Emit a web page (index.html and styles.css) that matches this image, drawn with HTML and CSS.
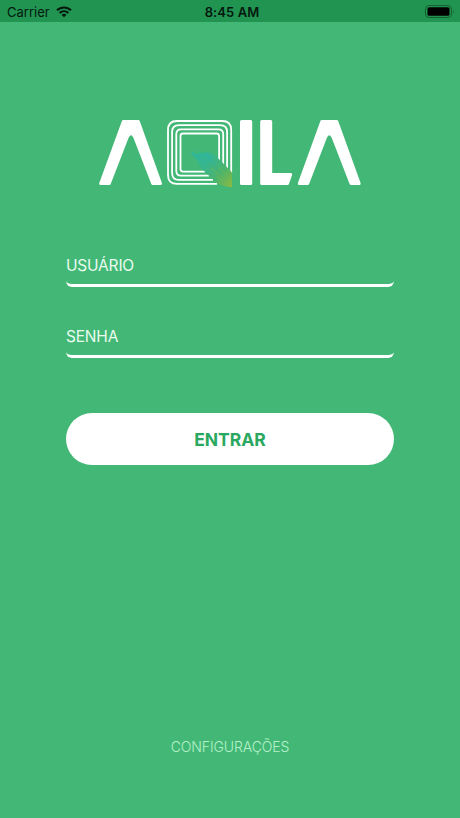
FILE: index.html
```html
<!DOCTYPE html>
<html lang="pt-BR">
<head>
    <meta charset="UTF-8">
    <meta name="viewport" content="width=device-width, initial-scale=1.0">
    <title>Aqila</title>
    <link rel="stylesheet" href="styles.css">
</head>
<body>

    <div class="status-bar">
        <div class="carrier">
            <span>Carrier</span>
            <svg class="wifi" width="16" height="12" viewBox="0 0 16 12" fill="none" stroke="#04180d" stroke-width="2">
                <path d="M1 4.3C5 .4 11 .4 15 4.3"/>
                <path d="M3.6 7C6.200 4.600 9.800 4.600 12.400 7"/>
                <path d="M8 11.300L5.500 8.800C7 7.500 9 7.500 10.500 8.800Z" fill="#04180d" stroke="none"/>
            </svg>
        </div>
        <div class="clock">8:45 AM</div>
        <svg class="battery" width="30" height="13" viewBox="0 0 30 13">
            <rect x=".5" y=".5" width="26" height="12" rx="3.5" fill="none" stroke="#14622f"/>
            <rect x="2.500" y="2.300" width="22" height="8.400" rx="1.500" fill="#000"/>
            <path d="M28 4.500Q29.300 6.500 28 8.500Z" fill="#14622f"/>
        </svg>
    </div>

    <main class="login">
        <svg class="logo" width="264" height="70" viewBox="98 119 264 70" role="img" aria-label="Aqila">
            <defs>
                <linearGradient id="feather" x1="189" y1="152" x2="232" y2="187" gradientUnits="userSpaceOnUse">
                    <stop offset="0" stop-color="#2fb892"/>
                    <stop offset=".4" stop-color="#39b58c"/>
                    <stop offset=".7" stop-color="#4cb36b"/>
                    <stop offset="1" stop-color="#8dbb41"/>
                </linearGradient>
            </defs>

            <g fill="#fff" stroke="#fff" stroke-width="3" stroke-linejoin="round">
                <path d="M123.300 121.500H138.300L160.500 183.500H152.700L134.700 137Q131 130.500 127.300 137L109.300 183.500H100.700Z"/>
                <path d="M241.500 121.500H250.700V183.500H241.500Z"/>
                <path d="M261.700 121.500H270.700V174.400H290.700L287.500 183.500H261.700Z"/>
                <path d="M321.800 121.500H336.800L359.200 183.500H351L333 137Q329.300 130.500 325.600 137L307.700 183.500H299.300Z"/>
            </g>

            <!-- Q rings -->
            <g fill="none" stroke="#fff" stroke-width="1.800">
                <path d="M217 183.900H177Q168 183.900 168 174.900V130Q168 121 177 121H222.200Q231.200 121 231.200 130V173"/>
                <path d="M213 179.800H179Q172.100 179.800 172.100 172.900V132Q172.100 125.100 179 125.100H220.200Q227.100 125.100 227.100 132V169"/>
                <path d="M209 175.700H181Q176.300 175.700 176.300 171V134Q176.300 129.300 181 129.300H218.500Q223.200 129.300 223.200 134V165"/>
                <path d="M205 171.600H183Q180.500 171.600 180.500 169.100V136Q180.500 133.500 183 133.500H216.600Q219.100 133.500 219.100 136V161"/>
            </g>

            <!-- Feather tail -->
            <path fill="url(#feather)" d="M188.500 152L193 154L192 151L196 154L199 153L198 150.500L202 153L206 151.500C212 152.500 216 156 221 161L232 172.500V187.300C226 186.500 221 185.500 216.500 183L203 170L197 162.500L200 163L193 157L196 157.500Z"/>
            <path fill="none" stroke="#79b94a" stroke-width="1" opacity=".6" d="M211 168L231 185M219 168L231 179M216 176L223 181"/>
            <path fill="none" stroke="#2ab6b8" stroke-width="1.500" opacity=".5" d="M192 153L207 163M201 154L216 164M206 154L211 158"/>
        </svg>

        <form class="form">
            <input class="field" type="text" placeholder="USUÁRIO" aria-label="USUÁRIO">
            <input class="field" type="password" placeholder="SENHA" aria-label="SENHA">
            <button class="enter" type="button">ENTRAR</button>
        </form>

        <a class="settings" href="#">CONFIGURAÇÕES</a>
    </main>

</body>
</html>
```
FILE: styles.css
```css
* {
    box-sizing: border-box;
}

body {
    margin: 0;
    height: 100vh;
    display: flex;
    flex-direction: column;
    overflow: hidden;
    background-color: #43b876;
    font-family: Inter, "Liberation Sans", sans-serif;
}

.status-bar {
    height: 22px;
    flex: none;
    display: grid;
    grid-template-columns: 1fr auto 1fr;
    align-items: center;
    padding: 1px 5px 0 7px;
    background-color: #219452;
    color: #04180d;
    font-size: 13px;
}

.carrier {
    display: flex;
    align-items: center;
    gap: 6px;
}

.clock {
    padding-left: 2px;
    font-weight: 600;
    letter-spacing: 0.1px;
}

.battery {
    justify-self: end;
}

.login {
    flex: 1;
    display: flex;
    flex-direction: column;
    align-items: center;
    padding: 97px 66px 62px;
}

.logo {
    display: block;
    flex: none;
}

.form {
    width: 100%;
    display: flex;
    flex-direction: column;
    margin-top: 57px;
}

/* Underline with the ends curving up */
.field {
    width: 100%;
    height: 41px;
    margin: 0 0 30px;
    padding: 1px 0 0;
    border: 0 solid #fff;
    border-bottom-width: 3px;
    border-radius: 6px;
    outline: none;
    background: transparent;
    color: #fff;
    font-family: inherit;
    font-size: 15.5px;
    letter-spacing: -0.2px;
}

.field::placeholder {
    color: #e9fbef;
    opacity: 1;
}

.enter {
    height: 52px;
    margin-top: 25px;
    border: none;
    border-radius: 26px;
    background-color: #fff;
    color: #2aa860;
    font-family: inherit;
    font-size: 17.5px;
    font-weight: 700;
}

.settings {
    margin-top: auto;
    color: #b5f0c8;
    font-size: 14px;
    font-weight: 300;
    line-height: 18px;
    letter-spacing: -0.1px;
    text-decoration: none;
}
```
